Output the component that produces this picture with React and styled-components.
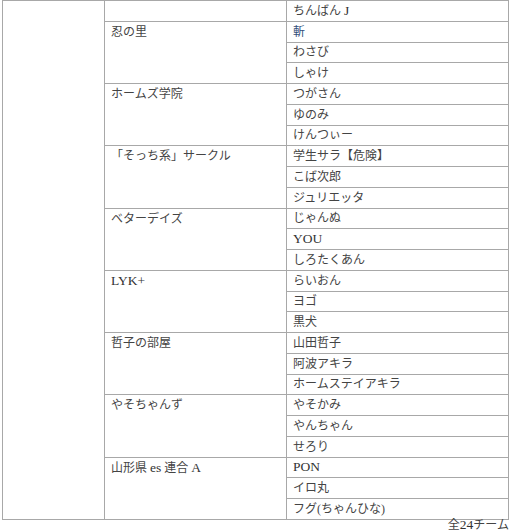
import React from 'react'
import styled, { createGlobalStyle } from 'styled-components'

const GlobalStyle = createGlobalStyle`
  html, body {
    margin: 0;
    padding: 0;
    background: #fff;
  }
  body {
    font-family: "Liberation Serif", "Noto Sans CJK JP", serif;
    color: #444;
  }
`

const Page = styled.div`
  padding: 0 3px 0 2px;
`

const Table = styled.table`
  width: 100%;
  border-collapse: collapse;
  table-layout: fixed;
  font-size: 12px;
`

const Cell = styled.td`
  border: 1px solid #a8a8a8;
  height: 19.75px;
  padding: 0 6px;
  vertical-align: ${({ $top }) => ($top ? 'top' : 'middle')};
  padding-top: ${({ $top }) => ($top ? '3px' : '0')};
  line-height: 14px;
  color: ${({ $accent }) => ($accent ? '#34507a' : '#444')};
  white-space: nowrap;
`

const Latin = styled.span`
  font-size: 13.5px;
  color: #333;
`

const Footer = styled.div`
  text-align: right;
  font-size: 12px;
  line-height: 11px;
  margin-top: -1px;
  color: #444;
`

// split text so latin runs get the larger serif size, like the mincho page
function Txt({ children }) {
  const parts = children.split(/([A-Za-z0-9+]+)/)
  return parts.map((p, i) =>
    /^[A-Za-z0-9+]+$/.test(p) ? <Latin key={i}>{p}</Latin> : p
  )
}

const teams = [
  { name: '忍の里', members: ['斬', 'わさび', 'しゃけ'] },
  { name: 'ホームズ学院', members: ['つがさん', 'ゆのみ', 'けんつぃー'] },
  { name: '「そっち系」サークル', members: ['学生サラ【危険】', 'こば次郎', 'ジュリエッタ'] },
  { name: 'ベターデイズ', members: ['じゃんぬ', 'YOU', 'しろたくあん'] },
  { name: 'LYK+', members: ['らいおん', 'ヨゴ', '黒犬'] },
  { name: '哲子の部屋', members: ['山田哲子', '阿波アキラ', 'ホームステイアキラ'] },
  { name: 'やそちゃんず', members: ['やそかみ', 'やんちゃん', 'せろり'] },
  { name: '山形県 es 連合 A', members: ['PON', 'イロ丸', 'フグ(ちゃんひな)'] },
]

export default function App() {
  const total = 1 + teams.length * 3
  return (
    <Page>
      <GlobalStyle />
      <Table>
        <colgroup>
          <col style={{ width: '102px' }} />
          <col style={{ width: '182px' }} />
          <col />
        </colgroup>
        <tbody>
          <tr>
            <Cell rowSpan={total} />
            <Cell />
            <Cell><Txt>ちんばん J</Txt></Cell>
          </tr>
          {teams.map((team) =>
            team.members.map((m, i) => (
              <tr key={team.name + m}>
                {i === 0 && (
                  <Cell rowSpan={3} $top>
                    <Txt>{team.name}</Txt>
                  </Cell>
                )}
                <Cell $accent={m === '斬'}><Txt>{m}</Txt></Cell>
              </tr>
            ))
          )}
        </tbody>
      </Table>
      <Footer><Txt>全24チーム</Txt></Footer>
    </Page>
  )
}
